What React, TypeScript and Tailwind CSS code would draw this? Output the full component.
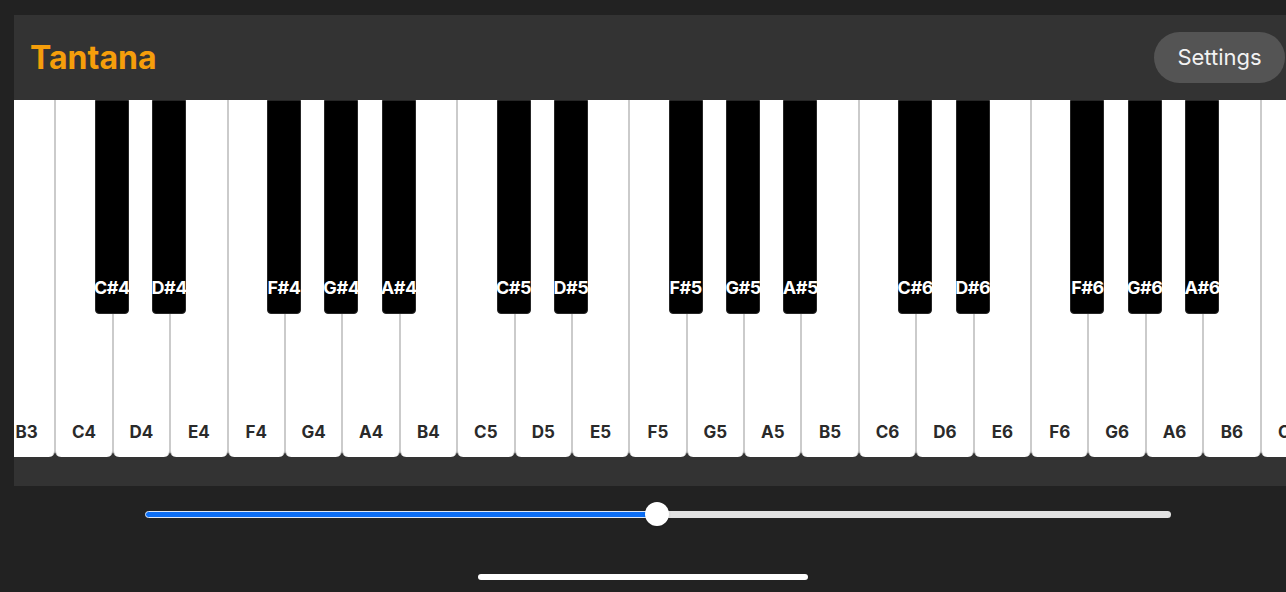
import React from "react";

const WHITE_KEYS = [
  "B3", "C4", "D4", "E4", "F4", "G4", "A4", "B4",
  "C5", "D5", "E5", "F5", "G5", "A5", "B5",
  "C6", "D6", "E6", "F6", "G6", "A6", "B6", "C7",
];

// notes that have a sharp right after them
const HAS_SHARP = ["C", "D", "F", "G", "A"];

function WhiteKey({ note, sharpVisible }: { note: string; sharpVisible: boolean }) {
  const letter = note[0];
  const octave = note.slice(1);
  const sharp = sharpVisible && HAS_SHARP.includes(letter) ? `${letter}#${octave}` : null;

  return (
    <div className="relative h-full w-[57.4px] shrink-0 rounded-b-[6px] border-x-[1.5px] border-[#cbcbcb] bg-white flex flex-col justify-end items-center pb-[15px]">
      <span className="text-[17px] font-bold text-[#2a2a2a] leading-5">{note}</span>
      {sharp && (
        <div className="absolute top-0 -right-[17px] z-10 h-[214px] w-[34px] rounded-b-[4px] border border-[#262626] bg-black flex flex-col justify-end items-center pb-[15px]">
          <span className="whitespace-nowrap text-[18px] font-bold leading-5 tracking-tight text-white">{sharp}</span>
        </div>
      )}
    </div>
  );
}

export default function App() {
  return (
    <div
      className="h-[592px] w-full overflow-hidden bg-[#222222]"
      style={{ fontFamily: "Inter, 'Noto Sans', sans-serif" }}
    >
      <div className="ml-[14px] mt-[15px] h-[471px] w-[1300px] bg-[#333333] flex flex-col">
        <div className="h-[85px] flex items-center justify-between pl-4 pr-[29px]">
          <h1 className="text-[32px] font-bold text-[#f59e0b]">Tantana</h1>
          <button className="h-[51px] w-[131px] rounded-full bg-[#545454] text-[22px] text-[#f2f2f2]">
            Settings
          </button>
        </div>
        <div className="h-[357px] overflow-hidden">
          <div className="flex h-full -ml-[16px]">
            {WHITE_KEYS.map((n, i) => (
              <WhiteKey key={n} note={n} sharpVisible={i > 0 && i < WHITE_KEYS.length - 1} />
            ))}
          </div>
        </div>
      </div>

      <div className="pt-[22px] pl-[145px]">
        <div className="relative h-[12px] w-[1026px] flex items-center">
          <div className="h-[7px] w-[512px] rounded-l-full border border-[#dfe9f7] bg-[#0b6ef5]" />
          <div className="h-[7px] flex-1 rounded-r-full bg-[#e2e2e2]" />
          <div className="absolute left-[500px] top-1/2 h-[24px] w-[24px] -translate-y-1/2 rounded-full bg-white shadow" />
        </div>
      </div>

      <div className="flex justify-center pt-[54px]">
        <div className="h-[6px] w-[330px] rounded-full bg-white" />
      </div>
    </div>
  );
}
